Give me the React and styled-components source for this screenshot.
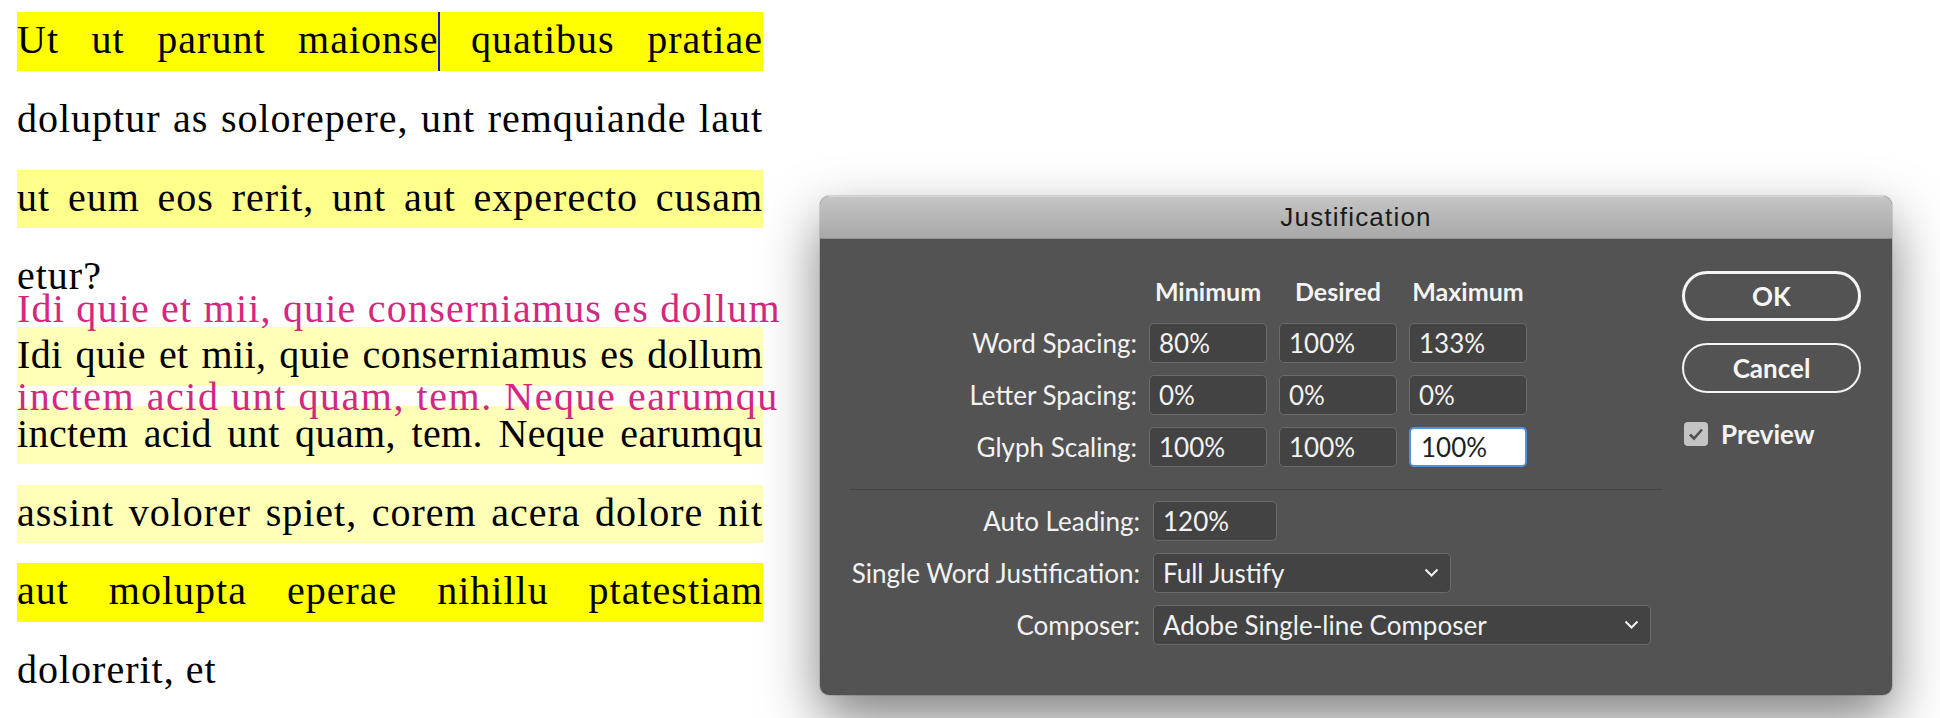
import React from 'react';
import styled, { createGlobalStyle } from 'styled-components';

const GlobalStyle = createGlobalStyle`
  html, body {
    margin: 0;
    padding: 0;
    background: #ffffff;
    overflow: hidden;
  }
`;

const tones = {
  strong: '#ffff00',
  medium: '#ffff8c',
  soft: '#ffffb8',
  none: 'transparent'
};

const Page = styled.div`
  display: flex;
  align-items: flex-start;
  padding: 12px 0 0 17px;
  width: 1940px;
  height: 718px;
  box-sizing: border-box;
`;

const TextColumn = styled.div`
  width: 746px;
  flex-shrink: 0;
  display: flex;
  flex-direction: column;
  gap: 20.25px;
  font-family: "Liberation Serif", "Times New Roman", serif;
  font-size: 40px;
  color: #000;
`;

const Line = styled.div`
  position: relative;
  height: 58.5px;
  line-height: 55px;
  padding-bottom: 3.5px;
  box-sizing: border-box;
  letter-spacing: ${({ $tight }) => ($tight ? 0.4 : 1)}px;
  background: ${({ $tone }) => tones[$tone || 'none']};
  text-align: justify;
  text-align-last: ${({ $last }) => ($last ? 'left' : 'justify')};
`;

const Ghost = styled.div`
  position: absolute;
  left: 0;
  top: ${({ $lift }) => -$lift}px;
  white-space: nowrap;
  letter-spacing: ${({ $spread }) => $spread}px;
  color: #d4287f;
  text-align: left;
  text-align-last: left;
  pointer-events: none;
`;

const Caret = styled.span`
  display: inline-block;
  width: 2px;
  height: 58.5px;
  margin-right: -2px;
  vertical-align: top;
  background: #1010e0;
`;

const Dialog = styled.div`
  position: relative;
  z-index: 1;
  flex-shrink: 0;
  width: 1072px;
  margin: 184px 0 0 57px;
  background: #535353;
  border-radius: 9px;
  overflow: hidden;
  box-shadow: 0 24px 55px rgba(0, 0, 0, 0.5), 0 0 0 1px rgba(0, 0, 0, 0.12);
  font-family: Lato, "Liberation Sans", sans-serif;
  color: #f2f2f2;
`;

const TitleBar = styled.div`
  height: 43px;
  box-sizing: border-box;
  border-top: 1px solid #d8d8d8;
  border-bottom: 1px solid #8f8f8f;
  background: linear-gradient(#c5c5c5, #a8a8a8);
  text-align: center;
  line-height: 41px;
  font-family: "Liberation Sans", Arial, sans-serif;
  font-size: 26px;
  letter-spacing: 1.2px;
  color: #1b1b1b;
`;

const DialogBody = styled.div`
  display: flex;
  gap: 20px;
  padding: 32px 31px 50px 30px;
`;

const Settings = styled.div`
  flex: 1;
  display: flex;
  flex-direction: column;
`;

const SpacingGrid = styled.div`
  display: grid;
  grid-template-columns: 287px repeat(3, 118px);
  grid-auto-rows: 40px;
  column-gap: 12px;
  row-gap: 12px;
`;

const OptionGrid = styled.div`
  display: grid;
  grid-template-columns: 290px auto;
  grid-auto-rows: 40px;
  column-gap: 13px;
  row-gap: 12px;
  justify-items: start;
`;

const ColumnHead = styled.div`
  align-self: center;
  text-align: center;
  font-size: 25px;
  font-weight: 700;
  color: #f4f4f4;
`;

const Label = styled.div`
  justify-self: end;
  align-self: center;
  font-size: 26px;
  white-space: nowrap;
`;

const Field = styled.div`
  width: ${({ $width }) => $width || 118}px;
  height: 40px;
  box-sizing: border-box;
  display: flex;
  align-items: center;
  justify-content: space-between;
  padding: 0 11px 0 ${({ $focused }) => ($focused ? 10 : 9)}px;
  border: ${({ $focused }) => ($focused ? '2px solid #4f93e0' : '1.5px solid #6b6b6b')};
  border-radius: 5px;
  background: ${({ $focused }) => ($focused ? '#ffffff' : '#434343')};
  color: ${({ $focused }) => ($focused ? '#1e1e1e' : '#f2f2f2')};
  font-size: 26px;
  white-space: nowrap;
`;

const Divider = styled.div`
  height: 1px;
  margin: 22px 0 11px;
  background: #454545;
`;

const Actions = styled.div`
  width: 179px;
  display: flex;
  flex-direction: column;
  gap: 22px;
`;

const Button = styled.div`
  height: 50px;
  box-sizing: border-box;
  display: flex;
  align-items: center;
  justify-content: center;
  border: ${({ $primary }) => ($primary ? '3px' : '2px')} solid #f4f4f4;
  border-radius: 25px;
  font-size: 26px;
  font-weight: 700;
  color: #f6f6f6;
`;

const CheckRow = styled.div`
  display: flex;
  align-items: center;
  gap: 13px;
  margin-top: 3px;
  padding-left: 2px;
  font-size: 26px;
  font-weight: 700;
`;

const CheckBox = styled.div`
  width: 24px;
  height: 24px;
  border-radius: 4px;
  background: #c4c4c4;
  display: flex;
  align-items: center;
  justify-content: center;
`;

const Chevron = () => (
  <svg width="15" height="10" viewBox="0 0 15 10">
    <polyline points="1.5,1.5 7.5,7.5 13.5,1.5" fill="none" stroke="#f2f2f2" strokeWidth="2" />
  </svg>
);

const textLines = [
  { tone: 'strong', content: <>Ut ut parunt maionse<Caret /> quatibus pratiae</> },
  { tone: 'none', content: 'doluptur as solorepere, unt remquiande laut' },
  { tone: 'medium', content: 'ut eum eos rerit, unt aut experecto cusam' },
  { tone: 'none', content: 'etur?', last: true },
  { tone: 'soft', content: 'Idi quie et mii, quie conserniamus es dollum', ghost: 46, spread: 1.2, tight: true },
  { tone: 'soft', content: 'inctem acid unt quam, tem. Neque earumqu', ghost: 37, spread: 1.55, tight: true },
  { tone: 'soft', content: 'assint volorer spiet, corem acera dolore nit' },
  { tone: 'strong', content: 'aut molupta eperae nihillu ptatestiam' },
  { tone: 'none', content: 'dolorerit, et', last: true }
];

const spacingRows = [
  ['Word Spacing:', '80%', '100%', '133%'],
  ['Letter Spacing:', '0%', '0%', '0%'],
  ['Glyph Scaling:', '100%', '100%', '100%']
];

export default function App() {
  return (
    <>
      <GlobalStyle />
      <Page>
        <TextColumn>
          {textLines.map((line, i) => (
            <Line key={i} $tone={line.tone} $last={line.last} $tight={line.tight}>
              {line.ghost && <Ghost $lift={line.ghost} $spread={line.spread}>{line.content}</Ghost>}
              {line.content}
            </Line>
          ))}
        </TextColumn>

        <Dialog>
          <TitleBar>Justification</TitleBar>
          <DialogBody>
            <Settings>
              <SpacingGrid>
                <span />
                <ColumnHead>Minimum</ColumnHead>
                <ColumnHead>Desired</ColumnHead>
                <ColumnHead>Maximum</ColumnHead>
                {spacingRows.map((row, r) => (
                  <React.Fragment key={row[0]}>
                    <Label>{row[0]}</Label>
                    {row.slice(1).map((v, c) => (
                      <Field key={c} $focused={r === 2 && c === 2}>{v}</Field>
                    ))}
                  </React.Fragment>
                ))}
              </SpacingGrid>
              <Divider />
              <OptionGrid>
                <Label>Auto Leading:</Label>
                <Field $width={124}>120%</Field>
                <Label>Single Word Justification:</Label>
                <Field $width={298}>Full Justify<Chevron /></Field>
                <Label>Composer:</Label>
                <Field $width={498}>Adobe Single-line Composer<Chevron /></Field>
              </OptionGrid>
            </Settings>
            <Actions>
              <Button $primary>OK</Button>
              <Button>Cancel</Button>
              <CheckRow>
                <CheckBox>
                  <svg width="16" height="14" viewBox="0 0 16 14">
                    <polyline points="2,7.5 6,11.5 14,2.5" fill="none" stroke="#505050" strokeWidth="2.6" />
                  </svg>
                </CheckBox>
                Preview
              </CheckRow>
            </Actions>
          </DialogBody>
        </Dialog>
      </Page>
    </>
  );
}
